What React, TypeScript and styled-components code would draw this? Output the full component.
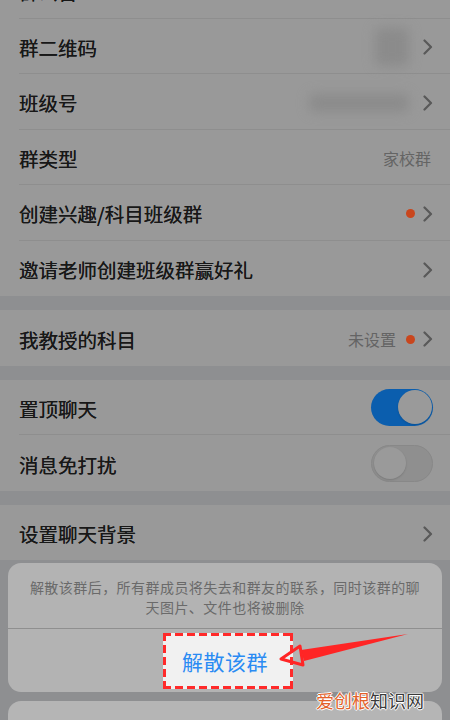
import React from "react";
import styled, { createGlobalStyle } from "styled-components";

const GlobalStyle = createGlobalStyle`
  html, body {
    margin: 0;
    padding: 0;
  }
  body {
    width: 450px;
    height: 720px;
    overflow: hidden;
    background: #8e8f91;
    font-family: "Noto Sans CJK SC", "Noto Sans", sans-serif;
  }
`;

const Screen = styled.div`
  position: relative;
  width: 450px;
  height: 720px;
  overflow: hidden;
  background: #8e8f91;
`;

const List = styled.div`
  display: flex;
  flex-direction: column;
  gap: 14px;
  margin-top: -37px;
`;

const Section = styled.div`
  display: flex;
  flex-direction: column;
  background: #999999;
`;

const Row = styled.div`
  height: 55.5px;
  box-sizing: border-box;
  margin-left: 19px;
  padding: 3px 17px 0 0;
  display: flex;
  align-items: center;
  gap: 8px;
  border-bottom: 1px solid #8e8e8e;

  &:last-child {
    border-bottom: none;
  }
`;

const Label = styled.span`
  flex: 1;
  font-size: 19.5px;
  color: #181818;
  white-space: nowrap;
  text-shadow: 0 0 0.4px #181818;
`;

const Value = styled.span`
  font-size: 16px;
  color: #646464;
  margin-right: 2px;
`;

const Dot = styled.span`
  width: 9px;
  height: 9px;
  border-radius: 50%;
  background: #c9461d;
`;

const Blurred = styled.div<{ $w: number; $h: number }>`
  width: ${(p) => p.$w}px;
  height: ${(p) => p.$h}px;
  background: #8b8b8b;
  border-radius: 6px;
  filter: blur(6px);
  margin-right: 6px;
`;

const Toggle = styled.div<{ $on?: boolean }>`
  width: 62px;
  height: 37px;
  box-sizing: border-box;
  border-radius: 19px;
  padding: 1.5px;
  display: flex;
  justify-content: ${(p) => (p.$on ? "flex-end" : "flex-start")};
  background: ${(p) => (p.$on ? "#0b5eae" : "#8f8f8f")};
  border: ${(p) => (p.$on ? "none" : "1.5px solid #888888")};
  margin-bottom: 2px;

  &::before {
    content: "";
    width: ${(p) => (p.$on ? 34 : 32)}px;
    height: ${(p) => (p.$on ? 34 : 32)}px;
    border-radius: 50%;
    background: #9a9a9a;
    box-shadow: 0 1px 2px rgba(0, 0, 0, 0.15);
  }
`;

const Chevron = () => (
  <svg width="10" height="16" viewBox="0 0 10 16">
    <polyline
      points="1.5,1.5 8,8 1.5,14.5"
      fill="none"
      stroke="#595959"
      strokeWidth="2.2"
      strokeLinecap="round"
      strokeLinejoin="round"
    />
  </svg>
);

const Sheet = styled.div`
  position: absolute;
  top: 563px;
  left: 8px;
  right: 8px;
  display: flex;
  flex-direction: column;
  gap: 9px;
`;

const SheetCard = styled.div`
  background: #b3b3b3;
  border-radius: 13px;
`;

const Message = styled.div`
  height: 66px;
  box-sizing: border-box;
  padding: 14px 18px 0;
  font-size: 14px;
  line-height: 20px;
  letter-spacing: 0.45px;
  color: #6a6a6a;
  text-align: center;
  border-bottom: 1px solid #8f8f8f;
`;

const ActionButton = styled.div`
  position: relative;
  height: 63px;
  display: flex;
  align-items: center;
  justify-content: center;
`;

const Highlight = styled.div`
  position: absolute;
  left: 155px;
  top: 4px;
  width: 130px;
  height: 56px;
  box-sizing: border-box;
  background:
    repeating-linear-gradient(90deg, #ff2a2a 0 8px, transparent 8px 12px) top / 100% 3px no-repeat,
    repeating-linear-gradient(90deg, #ff2a2a 0 8px, transparent 8px 12px) bottom / 100% 3px no-repeat,
    repeating-linear-gradient(180deg, #ff2a2a 0 8px, transparent 8px 12px) left / 3px 100% no-repeat,
    repeating-linear-gradient(180deg, #ff2a2a 0 8px, transparent 8px 12px) right / 3px 100% no-repeat,
    #f1f1f1;
`;

const ActionLabel = styled.span`
  position: relative;
  font-size: 21px;
  color: #2a8bf3;
  letter-spacing: 0.5px;
`;

const CancelCard = styled.div`
  height: 57px;
  background: #b5b5b5;
  border-radius: 13px;
`;

const Arrow = styled.svg`
  position: absolute;
  left: 270px;
  top: 625px;
`;

const Watermark = styled.div`
  position: absolute;
  left: 316px;
  top: 689px;
  font-size: 18px;
  line-height: 22px;
  color: #3b3b3b;
  text-shadow: 1px 0 0 #fff, -1px 0 0 #fff, 0 1px 0 #fff, 0 -1px 0 #fff;

  b {
    font-weight: normal;
    color: #e3612a;
  }
`;

export default function App() {
  return (
    <>
      <GlobalStyle />
      <Screen>
        <List>
          <Section>
            <Row>
              <Label>群公告</Label>
            </Row>
            <Row>
              <Label>群二维码</Label>
              <Blurred $w={34} $h={38} />
              <Chevron />
            </Row>
            <Row>
              <Label>班级号</Label>
              <Blurred $w={100} $h={18} />
              <Chevron />
            </Row>
            <Row>
              <Label>群类型</Label>
              <Value>家校群</Value>
            </Row>
            <Row>
              <Label>创建兴趣/科目班级群</Label>
              <Dot />
              <Chevron />
            </Row>
            <Row>
              <Label>邀请老师创建班级群赢好礼</Label>
              <Chevron />
            </Row>
          </Section>
          <Section>
            <Row>
              <Label>我教授的科目</Label>
              <Value>未设置</Value>
              <Dot />
              <Chevron />
            </Row>
          </Section>
          <Section>
            <Row>
              <Label>置顶聊天</Label>
              <Toggle $on />
            </Row>
            <Row>
              <Label>消息免打扰</Label>
              <Toggle />
            </Row>
          </Section>
          <Section>
            <Row>
              <Label>设置聊天背景</Label>
              <Chevron />
            </Row>
          </Section>
        </List>

        <Sheet>
          <SheetCard>
            <Message>
              解散该群后，所有群成员将失去和群友的联系，同时该群的聊天图片、文件也将被删除
            </Message>
            <ActionButton>
              <Highlight />
              <ActionLabel>解散该群</ActionLabel>
            </ActionButton>
          </SheetCard>
          <CancelCard />
        </Sheet>

        <Arrow width="145" height="50" viewBox="0 0 145 50">
          <polygon points="31,25 138,9 34,36" fill="#ff2525" />
          <polygon
            points="11,34 30,21 33,40"
            fill="none"
            stroke="#ff2525"
            strokeWidth="3"
            strokeLinejoin="round"
          />
        </Arrow>

        <Watermark>
          <b>爱创根</b>知识网
        </Watermark>
      </Screen>
    </>
  );
}
